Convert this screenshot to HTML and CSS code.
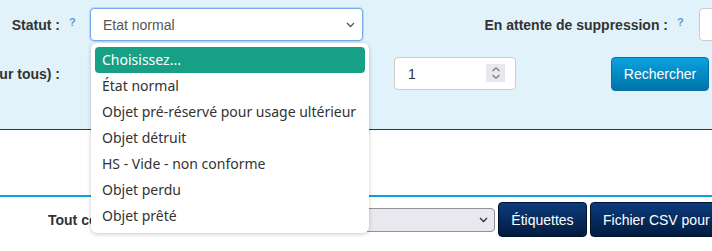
FILE: index.html
```html
<!DOCTYPE html>
<html lang="fr">
<head>
    <meta charset="UTF-8">
    <meta name="viewport" content="width=device-width, initial-scale=1.0">
    <title>Recherche d'objets</title>
    <link rel="stylesheet" href="styles.css">
</head>
<body>
    <div class="filters">
        <div class="row">
            <label class="lbl">Statut :</label>
            <span class="help">?</span>
            <div class="select focused">
                <span>Etat normal</span>
                <svg class="chev" width="9" height="6" viewBox="0 0 9 6"><path d="M1 1l3.5 3.5L8 1" fill="none" stroke="#555" stroke-width="1.3"/></svg>
            </div>
            <label class="lbl lbl-right">En attente de suppression :</label>
            <span class="help">?</span>
            <div class="input short"></div>
        </div>
        <div class="row">
            <label class="lbl">Quantité (pour tous) :</label>
            <span class="help"></span>
            <div class="blank"></div>
            <div class="input num">
                <span>1</span>
                <span class="spin">
                    <svg width="10" height="14" viewBox="0 0 10 14"><path d="M1.5 5L5 1.8 8.5 5M1.5 9L5 12.2 8.5 9" fill="none" stroke="#777" stroke-width="1.2"/></svg>
                </span>
            </div>
            <button class="btn-search">Rechercher</button>
        </div>
    </div>

    <div class="results"></div>

    <div class="actions">
        <label class="lbl-all">Tout cocher :</label>
        <div class="select grey">
            <span></span>
            <svg class="chev" width="9" height="6" viewBox="0 0 9 6"><path d="M1 1l3.5 3.5L8 1" fill="none" stroke="#333" stroke-width="1.3"/></svg>
        </div>
        <button class="btn-dark">Étiquettes</button>
        <button class="btn-dark">Fichier CSV pour impression</button>
    </div>

    <!-- liste ouverte du select Statut -->
    <ul class="dropdown">
        <li class="active">Choisissez...</li>
        <li>État normal</li>
        <li>Objet pré-réservé pour usage ultérieur</li>
        <li>Objet détruit</li>
        <li>HS - Vide - non conforme</li>
        <li>Objet perdu</li>
        <li>Objet prêté</li>
    </ul>
</body>
</html>
```

FILE: styles.css
```css
body {
    font-family: 'Liberation Sans', Arial, sans-serif;
    font-size: 14px;
    color: #333;
    margin: 0;
    padding: 0;
    overflow: hidden;
    position: relative;
}
.filters {
    background-color: #e1f2fa;
    border-bottom: 1px solid #333;
    box-sizing: border-box;
    padding-top: 8px;
    height: 130px;
}
.row {
    display: flex;
    align-items: center;
    height: 33px;
    margin-bottom: 16px;
    white-space: nowrap;
}
.lbl {
    width: 60px;
    flex: none;
    display: flex;
    justify-content: flex-end;
    font-weight: bold;
    color: #333;
}
.lbl-right {
    width: 284px;
    margin-left: 21px;
}
.help {
    width: 30px;
    flex: none;
    box-sizing: border-box;
    padding-left: 9px;
    padding-bottom: 6px;
    color: #5b9bd5;
    font-size: 11px;
    font-weight: bold;
}
.row .lbl-right + .help {
    width: 31px;
}
.select {
    display: flex;
    align-items: center;
    justify-content: space-between;
    box-sizing: border-box;
    width: 273px;
    height: 33px;
    padding: 0 7px 0 12px;
    background: #fff;
    border: 1px solid #ccc;
    border-radius: 4px;
    color: #555;
    flex: none;
}
.select.focused {
    border-color: #74acea;
    box-shadow: 0 0 0 1px rgba(116, 172, 234, 0.35);
}
.input {
    box-sizing: border-box;
    height: 33px;
    background: #fff;
    border: 1px solid #ccc;
    border-radius: 4px;
    flex: none;
}
.input.short {
    width: 100px;
}
.blank {
    width: 304px;
    flex: none;
}
.input.num {
    width: 122px;
    display: flex;
    align-items: center;
    justify-content: space-between;
    padding: 0 10px 0 13px;
    color: #333;
}
.spin {
    display: flex;
    align-items: center;
    justify-content: center;
    width: 19px;
    height: 18px;
    margin-top: -2px;
    background: #e8e8ec;
}
.btn-search {
    margin-left: 95px;
    width: 98px;
    height: 34px;
    flex: none;
    font-family: inherit;
    font-size: 14px;
    color: #fff;
    border: 1px solid #0a6fa4;
    border-radius: 4px;
    background: linear-gradient(#0aa2de, #0073aa);
    cursor: pointer;
}
.results {
    height: 65px;
    background: #fff;
}
.actions {
    border-top: 2px solid #0ea0df;
    padding-top: 5px;
    display: flex;
    align-items: center;
    gap: 3px;
    white-space: nowrap;
}
.lbl-all {
    margin-left: 48px;
    width: 95px;
    flex: none;
    font-weight: bold;
    color: #333;
}
.select.grey {
    width: 349px;
    height: 24px;
    background: #e9e9ed;
    border-color: #8f8f9d;
    padding-right: 6px;
}
.btn-dark {
    height: 35px;
    padding: 0 12px;
    flex: none;
    font-family: inherit;
    font-size: 14px;
    color: #fff;
    border: 1px solid #01132c;
    border-radius: 4px;
    background: linear-gradient(#0b3c7c, #021b40);
    cursor: pointer;
}
.btn-dark:first-of-type {
    width: 89px;
    padding: 0;
}
.dropdown {
    position: absolute;
    left: 91px;
    top: 43px;
    width: 278px;
    box-sizing: border-box;
    margin: 0;
    padding: 4px;
    list-style: none;
    background: #fff;
    border-radius: 6px;
    box-shadow: 0 1px 4px rgba(0, 0, 0, 0.22);
    font-family: 'Noto Sans', 'Open Sans', sans-serif;
    font-size: 14px;
    color: #333;
}
.dropdown li {
    height: 26px;
    line-height: 26px;
    padding-left: 7px;
    white-space: nowrap;
}
.dropdown li.active {
    background: #17a086;
    color: #fff;
    border-radius: 4px;
}
```
